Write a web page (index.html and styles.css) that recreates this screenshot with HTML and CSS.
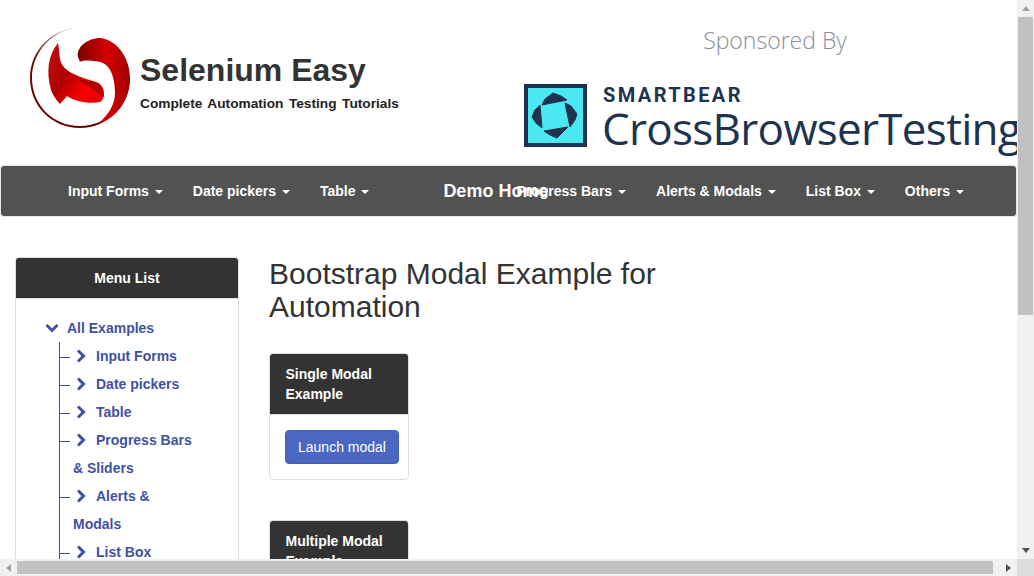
FILE: index.html
```html
<!DOCTYPE html>
<html lang="en">

<head>
    <meta charset="UTF-8">
    <title>Bootstrap Modal Example for Automation</title>
    <link rel="stylesheet" href="styles.css">
</head>

<body>
    <div class="window">
        <div class="page">
            <div class="page-inner">
                <header class="top">
                    <div class="brand">
                        <svg class="logo" width="100" height="101" viewBox="0 0 100 101">
                            <defs>
                                <linearGradient id="lobe" x1="0" y1="0" x2="1" y2="0">
                                    <stop offset="0" stop-color="#7a0000" />
                                    <stop offset="0.55" stop-color="#d40000" />
                                    <stop offset="1" stop-color="#a00000" />
                                </linearGradient>
                                <linearGradient id="band" x1="0" y1="0" x2="1" y2="0.7">
                                    <stop offset="0" stop-color="#c81010" />
                                    <stop offset="0.45" stop-color="#b00000" />
                                    <stop offset="0.8" stop-color="#fa0000" />
                                    <stop offset="1" stop-color="#e80000" />
                                </linearGradient>
                                <linearGradient id="ring" x1="0.5" y1="0" x2="0.5" y2="1">
                                    <stop offset="0" stop-color="#c9a0a0" />
                                    <stop offset="0.3" stop-color="#6a0a0a" />
                                    <stop offset="1" stop-color="#700000" />
                                </linearGradient>
                            </defs>
                            <path d="M46 1C20 3 0 25 0 51C0 79 22 101 50 101C78 101 100 78 100 51L98 51C98 77 77 99 50 99C23 99 2 78 2 51C2 26 21 4 46 1Z" fill="url(#ring)" />
                            <path d="M48 30C46 20 58 11 70 11C88 13 100 32 100 51C100 72 88 90 68 97C78 88 85 78 85 66C85 50 80 37 70 35C60 33 52 33 50 35Z" fill="url(#lobe)" />
                            <path d="M28 16C18 28 16 45 21 63C23 68 26 73 30 77L37 69C45 75 60 77 70 75C77 71 75 58 66 55C50 50 32 45 30 32C29 26 29 20 28 16Z" fill="url(#band)" />
                            <path d="M45 50C55 54 62 54 66 55C73 58 74 65 72 70C65 62 55 58 45 50Z" fill="#8a0000" opacity="0.6" />
                        </svg>
                        <div class="brand-text">
                            <h1>Selenium Easy</h1>
                            <p>Complete Automation Testing Tutorials</p>
                        </div>
                    </div>
                    <div class="sponsor">
                        <p class="sponsor-title">Sponsored By</p>
                        <div class="sponsor-logo">
                            <svg class="cbt-mark" width="63" height="63" viewBox="0 0 63 63">
                                <rect x="2" y="2" width="59" height="59" fill="#4ae8f0" stroke="#1d3350" stroke-width="4" />
                                <g fill="#1d3350" stroke="#1d3350" stroke-linejoin="round">
                                    <polygon points="18,21 21,15 29,9 37,12 43,16" />
                                    <polygon points="41,19 47,22 53,30 51,36 46,43" />
                                    <polygon points="44,43 38,49 33,54 26,51 20,47" />
                                    <polygon points="18,44 12,39 8,33 11,26 16,21" />
                                </g>
                            </svg>
                            <div class="cbt-text">
                                <span class="cbt-small">SMARTBEAR</span>
                                <span class="cbt-big">CrossBrowserTesting</span>
                            </div>
                        </div>
                    </div>
                </header>

                <nav class="navbar">
                    <a href="#">Input Forms <i class="caret"></i></a>
                    <a href="#">Date pickers <i class="caret"></i></a>
                    <a href="#">Table <i class="caret"></i></a>
                    <a href="#" class="nav-home">Demo Home</a>
                    <a href="#">Progress Bars <i class="caret"></i></a>
                    <a href="#">Alerts &amp; Modals <i class="caret"></i></a>
                    <a href="#">List Box <i class="caret"></i></a>
                    <a href="#">Others <i class="caret"></i></a>
                </nav>

                <div class="content">
                    <aside class="panel">
                        <div class="panel-head">Menu List</div>
                        <div class="panel-body">
                            <a href="#" class="tree-root">
                                <svg class="chev-down" width="14" height="10" viewBox="0 0 14 10"><path d="M1.5 2 7 7.5 12.5 2" fill="none" stroke="#3f51a3" stroke-width="3" /></svg>All Examples
                            </a>
                            <ul class="tree">
                                <li><svg class="chev" width="10" height="14" viewBox="0 0 10 14"><path d="M2 1.5 7.5 7 2 12.5" fill="none" stroke="#3f51a3" stroke-width="3" /></svg>Input Forms</li>
                                <li><svg class="chev" width="10" height="14" viewBox="0 0 10 14"><path d="M2 1.5 7.5 7 2 12.5" fill="none" stroke="#3f51a3" stroke-width="3" /></svg>Date pickers</li>
                                <li><svg class="chev" width="10" height="14" viewBox="0 0 10 14"><path d="M2 1.5 7.5 7 2 12.5" fill="none" stroke="#3f51a3" stroke-width="3" /></svg>Table</li>
                                <li><svg class="chev" width="10" height="14" viewBox="0 0 10 14"><path d="M2 1.5 7.5 7 2 12.5" fill="none" stroke="#3f51a3" stroke-width="3" /></svg>Progress Bars &amp; Sliders</li>
                                <li><svg class="chev" width="10" height="14" viewBox="0 0 10 14"><path d="M2 1.5 7.5 7 2 12.5" fill="none" stroke="#3f51a3" stroke-width="3" /></svg>Alerts &amp; Modals</li>
                                <li><svg class="chev" width="10" height="14" viewBox="0 0 10 14"><path d="M2 1.5 7.5 7 2 12.5" fill="none" stroke="#3f51a3" stroke-width="3" /></svg>List Box</li>
                            </ul>
                        </div>
                    </aside>

                    <main class="main">
                        <h2>Bootstrap Modal Example for Automation</h2>
                        <section class="card">
                            <div class="card-head">Single Modal Example</div>
                            <div class="card-body">
                                <button class="btn" type="button">Launch modal</button>
                            </div>
                        </section>
                        <section class="card">
                            <div class="card-head">Multiple Modal Example</div>
                            <div class="card-body">
                                <button class="btn" type="button">Launch modal</button>
                            </div>
                        </section>
                    </main>
                </div>
            </div>
        </div>

        <div class="vbar">
            <i class="arrow arrow-up"></i>
            <div class="vbar-track"><div class="vbar-thumb"></div></div>
            <i class="arrow arrow-down"></i>
        </div>
        <div class="hbar">
            <i class="arrow arrow-left"></i>
            <div class="hbar-track"><div class="hbar-thumb"></div></div>
            <i class="arrow arrow-right"></i>
        </div>
        <div class="corner"></div>
    </div>
</body>

</html>
```

FILE: styles.css
```css
* {
    margin: 0;
    padding: 0;
    box-sizing: border-box;
}

html,
body {
    height: 100%;
    overflow: hidden;
}

body {
    background-color: #fff;
    color: #333;
    font-family: "Liberation Sans", Arial, sans-serif;
    font-size: 14px;
}

a {
    color: inherit;
    text-decoration: none;
}

.window {
    display: grid;
    grid-template-columns: 1017px 17px;
    grid-template-rows: 559px 17px;
    height: 576px;
}

.page {
    overflow: hidden;
}

.page-inner {
    width: 1026px;
}

/* header */
.top {
    display: flex;
    justify-content: space-between;
    height: 165px;
}

.brand {
    display: flex;
    padding: 27px 0 0 30px;
}

.logo {
    flex: none;
}

.brand-text {
    margin: 24px 0 0 10px;
}

.brand-text h1 {
    font-size: 32px;
    line-height: 38px;
    font-weight: bold;
    color: #333;
}

.brand-text p {
    margin-top: 7px;
    font-size: 13.7px;
    line-height: 16px;
    font-weight: bold;
    word-spacing: 1.7px;
    color: #222;
}

.sponsor {
    width: 502px;
}

.sponsor-title {
    margin-top: 24px;
    font-family: "Open Sans", sans-serif;
    font-weight: 300;
    font-size: 23px;
    line-height: 33px;
    text-align: center;
    color: #87909f;
}

.sponsor-logo {
    display: flex;
    margin-top: 27px;
    white-space: nowrap;
}

.cbt-mark {
    flex: none;
}

.cbt-text {
    display: flex;
    flex-direction: column;
    margin-left: 15px;
    color: #1d3350;
}

.cbt-small {
    margin: -1px 0 0 1px;
    font-family: "Roboto", sans-serif;
    font-weight: 700;
    font-size: 20px;
    line-height: 24px;
    letter-spacing: 2.4px;
}

.cbt-big {
    font-family: "Open Sans", sans-serif;
    font-size: 44px;
    line-height: 42px;
    letter-spacing: -0.7px;
}

/* nav */
.navbar {
    display: flex;
    align-items: center;
    width: 1017px;
    height: 52px;
    padding-left: 67px;
    gap: 30px;
    background-color: #525252;
    border: 1px solid #e7e7e7;
    border-radius: 4px;
    color: #fff;
    font-weight: bold;
    white-space: nowrap;
}

.nav-home {
    margin: 0 -62px 0 44px;
    font-size: 18px;
}

.caret {
    display: inline-block;
    margin-left: 2px;
    vertical-align: middle;
    border-top: 4px solid #fff;
    border-left: 4px solid transparent;
    border-right: 4px solid transparent;
}

/* content */
.content {
    display: flex;
    padding: 40px 0 0 15px;
}

.panel {
    width: 224px;
    height: 400px;
    border: 1px solid #ddd;
    border-radius: 4px;
}

.panel-head {
    height: 41px;
    line-height: 40px;
    background-color: #333;
    border-radius: 3px 3px 0 0;
    border-bottom: 1px solid #ddd;
    color: #fff;
    font-weight: bold;
    text-align: center;
}

.panel-body {
    padding: 15px 0 0 29px;
    color: #3f51a3;
    font-weight: bold;
    line-height: 28px;
}

.tree-root {
    display: block;
}

.chev-down {
    margin-right: 8px;
}

.tree {
    list-style: none;
    width: 141px;
    margin-left: 14px;
    border-left: 1px solid #3f51a3;
}

.tree li {
    padding-left: 13px;
}

.tree li::before {
    content: "";
    display: inline-block;
    width: 10px;
    height: 1px;
    margin: 0 3px 0 -13px;
    vertical-align: middle;
    background-color: #3f51a3;
}

.chev {
    margin: 0 10px 0 3px;
    vertical-align: -2px;
}

.main {
    width: 410px;
    margin-left: 30px;
}

.main h2 {
    font-size: 30px;
    line-height: 33px;
    font-weight: normal;
    margin-bottom: 30px;
}

.card {
    width: 140px;
    margin-bottom: 40px;
    border: 1px solid #ddd;
    border-radius: 4px;
}

.card-head {
    padding: 10px 15.5px;
    line-height: 20px;
    background-color: #333;
    border-radius: 3px 3px 0 0;
    border-bottom: 1px solid #ddd;
    color: #fff;
    font-weight: bold;
}

.card-body {
    padding: 15px 9px 15px 15px;
}

.btn {
    display: block;
    width: 114px;
    height: 34px;
    background-color: #4a67c1;
    border: 1px solid #4260b5;
    border-radius: 4px;
    color: #fff;
    font-family: inherit;
    font-size: 14px;
}

/* scrollbars */
.vbar,
.hbar {
    display: flex;
    align-items: center;
    background-color: #f1f1f1;
}

.vbar {
    flex-direction: column;
    grid-column: 2;
    grid-row: 1;
}

.hbar {
    grid-column: 1;
    grid-row: 2;
}

.corner {
    background-color: #dcdcdc;
}

.vbar-track {
    flex: 1;
    width: 100%;
    padding: 0 1px;
}

.hbar-track {
    flex: 1;
    height: 100%;
    padding: 2px 0;
}

.vbar-thumb {
    height: 298px;
    background-color: #c1c1c1;
}

.hbar-thumb {
    width: 976px;
    height: 100%;
    background-color: #c1c1c1;
}

.arrow {
    display: block;
    flex: none;
    width: 0;
    height: 0;
    border-style: solid;
    border-color: transparent;
}

.arrow-up {
    margin: 6px 0;
    border-width: 0 4px 5px;
    border-bottom-color: #a3a3a3;
}

.arrow-down {
    margin: 6px 0;
    border-width: 5px 4px 0;
    border-top-color: #505050;
}

.arrow-left {
    margin: 0 6px;
    border-width: 4px 5px 4px 0;
    border-right-color: #a3a3a3;
}

.arrow-right {
    margin: 0 6px;
    border-width: 4px 0 4px 5px;
    border-left-color: #505050;
}
```
